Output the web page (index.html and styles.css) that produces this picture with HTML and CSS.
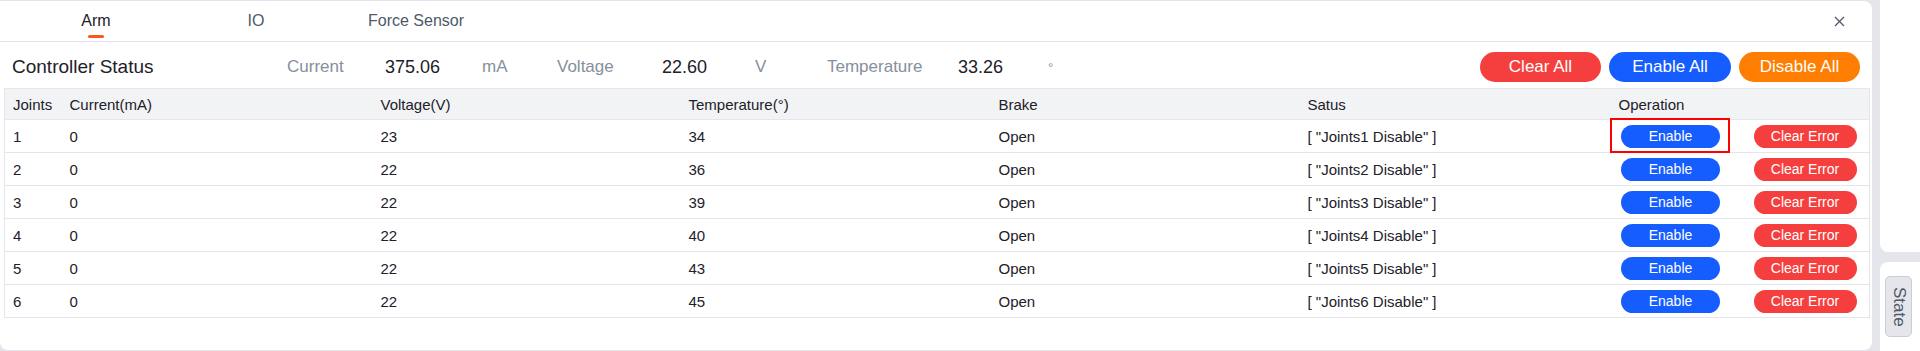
FILE: index.html
```html
<!DOCTYPE html>
<html lang="en">
<head>
<meta charset="utf-8">
<title>Controller Status</title>
<link rel="stylesheet" href="styles.css">
</head>
<body>
<div class="app">
  <main class="panel">
    <nav class="tabs">
      <div class="tab active">Arm</div>
      <div class="tab">IO</div>
      <div class="tab">Force Sensor</div>
      <button class="close" aria-label="Close">
        <svg width="11" height="11" viewBox="0 0 11 11"><path d="M1 1L10 10M10 1L1 10" stroke="#4e5969" stroke-width="1.3" fill="none"/></svg>
      </button>
    </nav>

    <section class="status-bar">
      <h2 class="title">Controller Status</h2>
      <div class="stats">
        <span class="label">Current</span><span class="value">375.06</span><span class="unit">mA</span>
        <span class="label">Voltage</span><span class="value">22.60</span><span class="unit">V</span>
        <span class="label">Temperature</span><span class="value">33.26</span><span class="unit deg">°</span>
      </div>
      <div class="actions">
        <button class="btn btn-red">Clear All</button>
        <button class="btn btn-blue">Enable All</button>
        <button class="btn btn-orange">Disable All</button>
      </div>
    </section>

    <table class="joints">
      <colgroup>
        <col class="c-joint"><col class="c-std"><col class="c-volt"><col class="c-temp"><col class="c-brake"><col class="c-std"><col class="c-op">
      </colgroup>
      <thead>
        <tr><th>Joints</th><th>Current(mA)</th><th>Voltage(V)</th><th>Temperature(°)</th><th>Brake</th><th>Satus</th><th>Operation</th></tr>
      </thead>
      <tbody>
        <tr><td>1</td><td>0</td><td>23</td><td>34</td><td>Open</td><td>[ "Joints1 Disable" ]</td>
          <td class="op"><div class="ops"><span class="en-wrap hl"><button class="sbtn sbtn-blue">Enable</button></span><button class="sbtn sbtn-red">Clear Error</button></div></td></tr>
        <tr><td>2</td><td>0</td><td>22</td><td>36</td><td>Open</td><td>[ "Joints2 Disable" ]</td>
          <td class="op"><div class="ops"><span class="en-wrap"><button class="sbtn sbtn-blue">Enable</button></span><button class="sbtn sbtn-red">Clear Error</button></div></td></tr>
        <tr><td>3</td><td>0</td><td>22</td><td>39</td><td>Open</td><td>[ "Joints3 Disable" ]</td>
          <td class="op"><div class="ops"><span class="en-wrap"><button class="sbtn sbtn-blue">Enable</button></span><button class="sbtn sbtn-red">Clear Error</button></div></td></tr>
        <tr><td>4</td><td>0</td><td>22</td><td>40</td><td>Open</td><td>[ "Joints4 Disable" ]</td>
          <td class="op"><div class="ops"><span class="en-wrap"><button class="sbtn sbtn-blue">Enable</button></span><button class="sbtn sbtn-red">Clear Error</button></div></td></tr>
        <tr><td>5</td><td>0</td><td>22</td><td>43</td><td>Open</td><td>[ "Joints5 Disable" ]</td>
          <td class="op"><div class="ops"><span class="en-wrap"><button class="sbtn sbtn-blue">Enable</button></span><button class="sbtn sbtn-red">Clear Error</button></div></td></tr>
        <tr><td>6</td><td>0</td><td>22</td><td>45</td><td>Open</td><td>[ "Joints6 Disable" ]</td>
          <td class="op"><div class="ops"><span class="en-wrap"><button class="sbtn sbtn-blue">Enable</button></span><button class="sbtn sbtn-red">Clear Error</button></div></td></tr>
      </tbody>
    </table>
  </main>

  <aside class="side">
    <div class="side-top"></div>
    <div class="side-bottom">
      <button class="state-btn">State</button>
    </div>
  </aside>
</div>
</body>
</html>
```

FILE: styles.css
```css
* { box-sizing: border-box; }

html, body {
  margin: 0;
  padding: 0;
}

body {
  background: #e5e6eb;
  font-family: "Liberation Sans", Arial, sans-serif;
  color: #1d2129;
  overflow: hidden;
}

.app {
  display: flex;
  height: 351px;
}

.panel {
  width: 1872px;
  margin-top: 1px;
  height: 349px;
  background: #ffffff;
  border-radius: 0 8px 8px 8px;
  display: flex;
  flex-direction: column;
}

/* Tabs */
.tabs {
  display: flex;
  align-items: stretch;
  height: 41px;
  padding-left: 16px;
  border-bottom: 1px solid #e5e6eb;
}

.tab {
  width: 160px;
  display: flex;
  align-items: center;
  justify-content: center;
  font-size: 16px;
  color: #4e5969;
  position: relative;
}

.tab.active {
  color: #1d2129;
}

.tab.active::after {
  content: "";
  position: absolute;
  left: 72px;
  width: 16px;
  height: 3px;
  bottom: 3px;
  border-radius: 2px;
  background: #f5591f;
}

.close {
  margin-left: auto;
  margin-right: 26px;
  align-self: center;
  width: 14px;
  height: 14px;
  padding: 0;
  border: 0;
  background: transparent;
  display: flex;
  align-items: center;
  justify-content: center;
}

/* Status bar */
.status-bar {
  display: flex;
  align-items: center;
  height: 46px;
  padding: 10px 12px 6px 12px;
}

.title {
  width: 275px;
  margin: 0;
  font-size: 19px;
  font-weight: normal;
  color: #1d2129;
}

.stats {
  display: grid;
  grid-template-columns: 98px 97px 75px 105px 93px 72px 131px 90px auto;
  align-items: center;
}

.label, .unit {
  font-size: 17px;
  color: #86909c;
}

.value {
  font-size: 18px;
  color: #1d2129;
}

.unit.deg {
  font-size: 13px;
}

.actions {
  margin-left: auto;
  display: flex;
  gap: 8px;
}

.btn {
  width: 121px;
  height: 30px;
  border: 0;
  border-radius: 15px;
  color: #ffffff;
  font-family: inherit;
  font-size: 17px;
  padding: 0;
}

.btn-blue { width: 122px; }
.btn-red { background: #f53f3f; }
.btn-blue { background: #165dff; }
.btn-orange { background: #ff7d00; }

/* Table */
.joints {
  margin: 0 4px;
  width: 1864px;
  border-collapse: collapse;
  table-layout: fixed;
  border: 1px solid #e5e6eb;
  font-size: 15px;
}

.c-joint { width: 57px; }
.c-std { width: 311px; }
.c-volt { width: 308px; }
.c-temp { width: 310px; }
.c-brake { width: 309px; }
.c-op { width: 259px; }

.joints th,
.joints td {
  border-bottom: 1px solid #e5e6eb;
  padding: 0 0 0 8px;
  text-align: left;
  font-weight: normal;
  white-space: nowrap;
  color: #1d2129;
}

.joints th {
  height: 31px;
  background: #f2f3f5;
}

.joints td {
  height: 33px;
}

.joints td.op {
  padding-left: 0;
}

.ops {
  display: flex;
  align-items: center;
}

.en-wrap {
  position: relative;
  width: 120px;
  display: flex;
  justify-content: center;
}

.en-wrap.hl::after {
  content: "";
  position: absolute;
  left: -1px;
  right: 1px;
  top: -7px;
  bottom: -5px;
  border: 2px solid #ff0000;
}

.sbtn {
  height: 23px;
  border: 0;
  border-radius: 12px;
  color: #ffffff;
  font-family: inherit;
  font-size: 14px;
  padding: 0;
}

.sbtn-blue {
  width: 99px;
  background: #165dff;
}

.sbtn-red {
  width: 103px;
  margin-left: 23px;
  background: #f53f3f;
}

/* Side strip */
.side {
  margin-left: 8px;
  flex: 1;
  display: flex;
  flex-direction: column;
  gap: 10px;
}

.side-top {
  height: 252px;
  background: #ffffff;
  border-radius: 0 0 0 8px;
}

.side-bottom {
  flex: 1;
  background: #ffffff;
  border-radius: 8px 0 0 0;
  padding: 14px 0 0 5px;
}

.state-btn {
  width: 27px;
  height: 61px;
  padding: 0;
  background: #e5e6eb;
  border: 1px solid #c9cdd4;
  border-radius: 5px;
  writing-mode: vertical-rl;
  font-family: inherit;
  font-size: 17px;
  color: #4e5969;
  display: flex;
  align-items: center;
  justify-content: center;
}
```
